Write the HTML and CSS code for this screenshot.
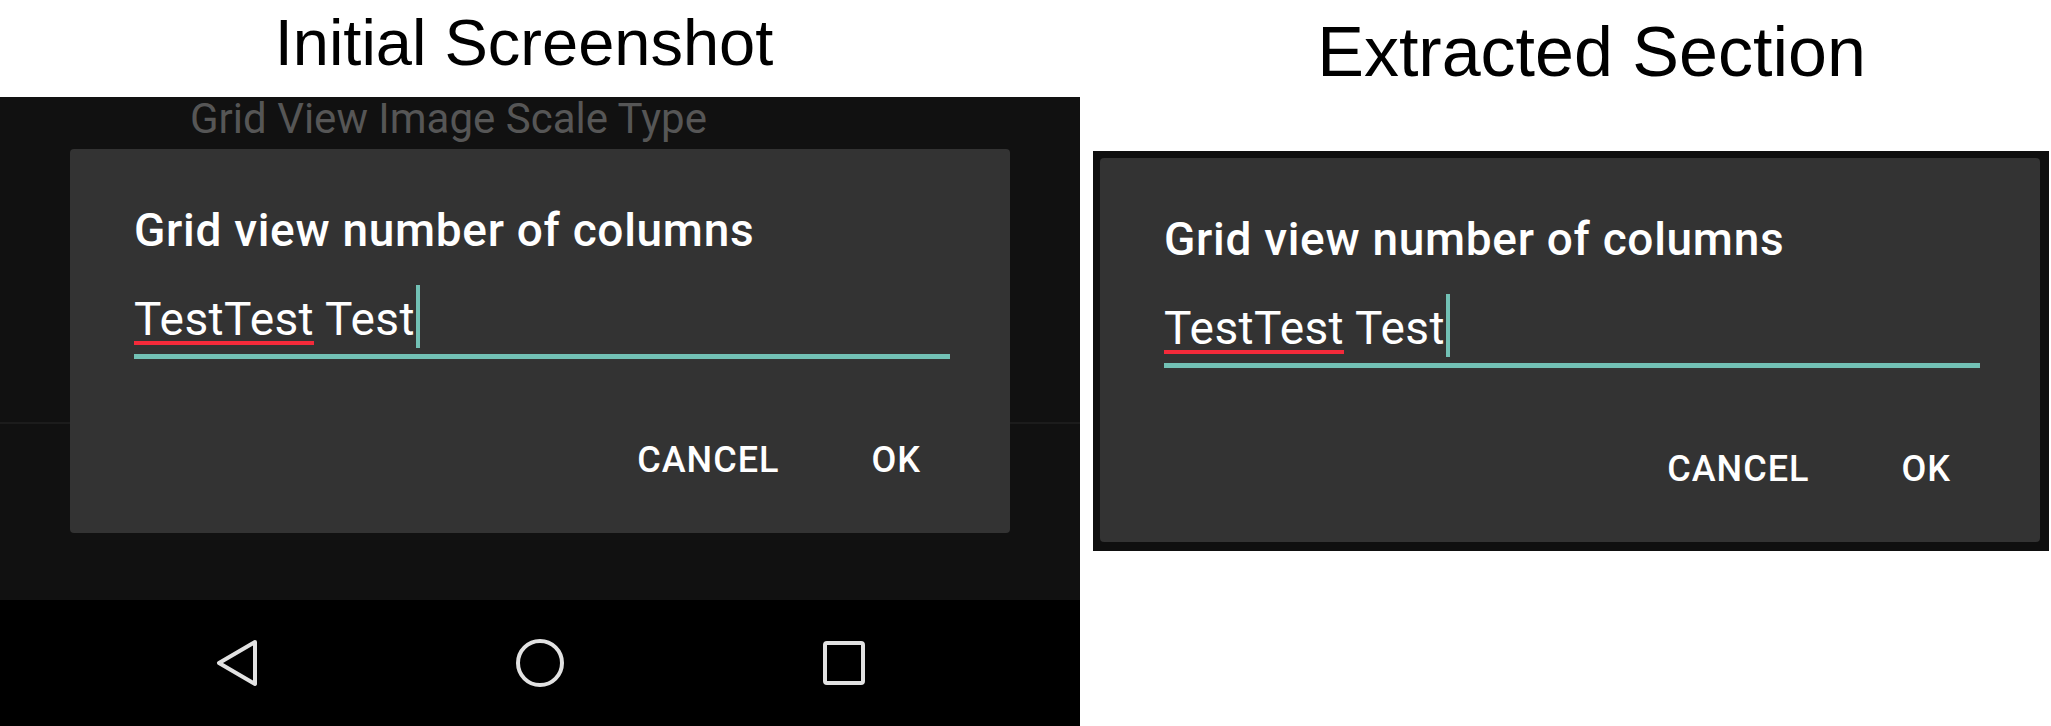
FILE: index.html
```html
<!DOCTYPE html>
<html>
<head>
<meta charset="utf-8">
<link rel="stylesheet" href="styles.css">
</head>
<body>
<div class="figure">
  <section class="col col-left">
    <h1 class="fig-title fig-title-left">Initial Screenshot</h1>
    <div class="phone">
      <div class="screen">
        <div class="pref">
          <div class="pref-title">Grid View Image Scale Type</div>
        </div>
        <div class="dialog dialog-overlay">
          <h2 class="dlg-title">Grid view number of columns</h2>
          <div class="field">
            <span class="value"><span class="misspelled">TestTest</span> Test</span>
            <span class="caret"></span>
          </div>
          <div class="actions">
            <span class="btn">Cancel</span>
            <span class="btn">OK</span>
          </div>
        </div>
      </div>
      <nav class="navbar">
        <div class="nav-item">
          <svg width="48" height="48" viewBox="0 0 48 48"><polygon points="43,3 7,24 43,45" fill="none" stroke="#e2e2e2" stroke-width="4" stroke-linejoin="round"/></svg>
        </div>
        <div class="nav-item">
          <svg width="48" height="48" viewBox="0 0 48 48"><circle cx="24" cy="24" r="22" fill="none" stroke="#e2e2e2" stroke-width="4"/></svg>
        </div>
        <div class="nav-item">
          <svg width="48" height="48" viewBox="0 0 48 48"><rect x="5" y="4" width="38" height="40" rx="2" fill="none" stroke="#e2e2e2" stroke-width="4"/></svg>
        </div>
      </nav>
    </div>
  </section>
  <section class="col col-right">
    <h1 class="fig-title fig-title-right">Extracted Section</h1>
    <div class="frame">
      <div class="dialog">
        <h2 class="dlg-title">Grid view number of columns</h2>
        <div class="field">
          <span class="value"><span class="misspelled">TestTest</span> Test</span>
          <span class="caret"></span>
        </div>
        <div class="actions">
          <span class="btn">Cancel</span>
          <span class="btn">OK</span>
        </div>
      </div>
    </div>
  </section>
</div>
</body>
</html>
```
FILE: styles.css
```css
html, body {
  margin: 0;
  padding: 0;
  background: #ffffff;
}

.figure {
  display: flex;
  width: 2051px;
  height: 726px;
  overflow: hidden;
}

.col-left {
  width: 1080px;
  flex: none;
}

.col-right {
  width: 971px;
  flex: none;
}

.fig-title {
  margin: 0;
  font-family: "Liberation Sans", Arial, sans-serif;
  font-weight: 400;
  color: #000;
  text-align: center;
  box-sizing: border-box;
  white-space: nowrap;
}

.fig-title-left {
  height: 97px;
  padding-top: 5px;
  padding-right: 32px;
  font-size: 65px;
  line-height: 75px;
}

.fig-title-right {
  height: 151px;
  padding-top: 12px;
  padding-left: 52px;
  font-size: 70px;
  line-height: 80px;
}

/* phone screenshot */
.phone {
  display: flex;
  flex-direction: column;
}

.screen {
  position: relative;
  height: 503px;
  background: #111111;
}

.pref {
  height: 325px;
  border-bottom: 2px solid #1c1c1c;
}

.pref-title {
  padding-left: 190px;
  font-family: Roboto, "Noto Sans", sans-serif;
  font-size: 42px;
  line-height: 44px;
  color: #565656;
}

.navbar {
  height: 126px;
  background: #000;
  display: flex;
  justify-content: center;
  align-items: center;
}

.nav-item {
  width: 304px;
  display: flex;
  justify-content: center;
  align-items: center;
}

.nav-item svg {
  display: block;
}

/* dialog */
.dialog {
  width: 940px;
  height: 384px;
  box-sizing: border-box;
  padding: 55px 60px 0 64px;
  background: #333333;
  border-radius: 4px;
  font-family: Roboto, "Noto Sans", sans-serif;
  color: #ffffff;
}

.dialog-overlay {
  position: absolute;
  top: 52px;
  left: 70px;
}

.dlg-title {
  margin: 0;
  font-size: 46px;
  font-weight: 500;
  letter-spacing: 0.7px;
  line-height: 52px;
  white-space: nowrap;
}

.field {
  margin-top: 29px;
  height: 69px;
  border-bottom: 5px solid #72c1b5;
  display: flex;
  align-items: flex-start;
}

.value {
  font-size: 46px;
  letter-spacing: 0.4px;
  line-height: 69px;
  white-space: pre;
}

.misspelled {
  background-image: linear-gradient(#f42a3a, #f42a3a);
  background-repeat: no-repeat;
  background-size: 100% 4px;
  background-position: 0 48.5px;
}

.caret {
  width: 4px;
  height: 63px;
  margin-left: 1px;
  background: #72c1b5;
}

.actions {
  margin-top: 81px;
  padding-right: 29px;
  display: flex;
  justify-content: flex-end;
  gap: 92px;
}

.btn {
  font-size: 36px;
  font-weight: 500;
  letter-spacing: 1px;
  line-height: 40px;
  text-transform: uppercase;
}

/* extracted frame */
.frame {
  margin-left: 13px;
  width: 956px;
  height: 400px;
  box-sizing: border-box;
  padding: 7px 9px 9px 7px;
  background: #0f0f0f;
}
```
